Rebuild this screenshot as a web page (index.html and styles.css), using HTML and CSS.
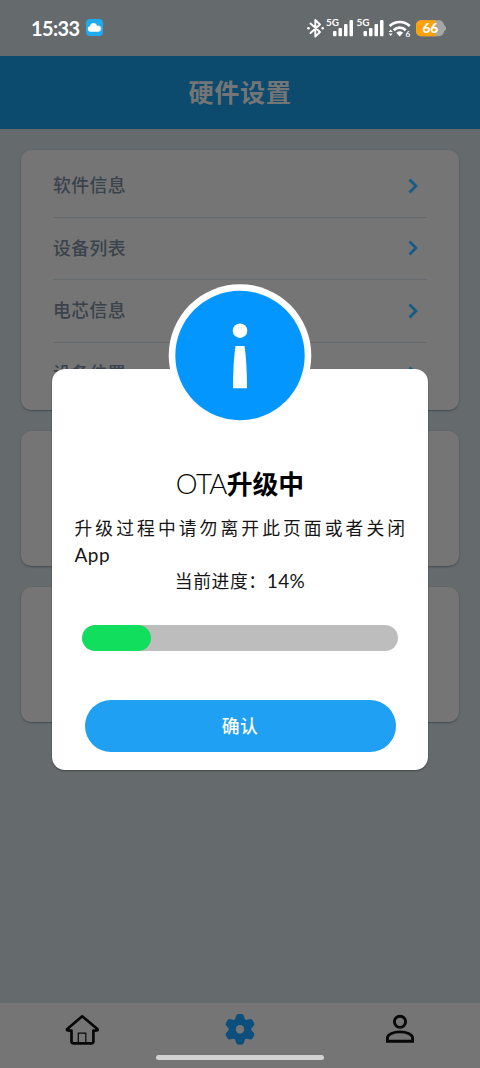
FILE: index.html
```html
<!DOCTYPE html>
<html lang="zh-CN">
<head>
<meta charset="utf-8">
<title>硬件设置</title>
<link rel="stylesheet" href="styles.css">
</head>
<body>
<div class="screen">
  <div class="status">
    <span class="clock">15:33</span>
    <svg class="weather" width="17" height="17" viewBox="0 0 17 17"><rect width="17" height="17" rx="4" fill="#1faaf4"/><circle cx="12.200" cy="9.600" r="3.200" fill="#a9dffc"/><path d="M4.200 12.800a2.900 2.900 0 0 1-.2-5.700a3.700 3.700 0 0 1 7.200-.3a3 3 0 0 1 0 6z" fill="#fff"/></svg>
    <svg class="indicators" width="150" height="28" viewBox="300 13 150 28">
      <g fill="none" stroke="#fff" stroke-width="1.900" stroke-linejoin="round" stroke-linecap="round"><path d="M310.500 22.500l9.500 8.500-4.700 4.500v-16.500l4.700 4.500-9.500 8.500"/></g>
      <circle cx="308.500" cy="27.300" r="1.300" fill="#fff"/><circle cx="322.700" cy="27.300" r="1.300" fill="#fff"/>
      <g fill="#fff" class="net"><text x="326" y="25" textLength="13" lengthAdjust="spacingAndGlyphs">5G</text><text x="356.500" y="25" textLength="13" lengthAdjust="spacingAndGlyphs">5G</text></g>
      <g fill="#fff"><rect x="333" y="30" width="3.500" height="5.300" rx="1"/><rect x="338.500" y="27" width="3.500" height="8.300" rx="1"/><rect x="344" y="23" width="3.500" height="12.300" rx="1"/><rect x="349.500" y="19" width="3.500" height="16.300" rx="1"/><rect x="363.500" y="30" width="3.500" height="5.300" rx="1"/><rect x="369" y="27" width="3.500" height="8.300" rx="1"/><rect x="374.500" y="23" width="3.500" height="12.300" rx="1"/><rect x="380" y="19" width="3.500" height="16.300" rx="1"/></g>
      <g fill="none" stroke="#fff" stroke-width="2.700"><path d="M389.700 25a14.500 14.500 0 0 1 20 0"/><path d="M393.700 29.200a8.500 8.500 0 0 1 12 0"/></g>
      <path d="M396.300 31.700a5.300 5.300 0 0 1 6.800 0l-3.400 3.700z" fill="#fff"/>
      <path d="M388.700 31l2-2.500 2 2.500zM388.700 32.500l2 2.500 2-2.500z" fill="#fff"/>
      <text x="405.600" y="35.500" class="wifi6">6</text>
      <path d="M442 23q4 1.500 4 4.200t-4 4.200z" fill="#a5a6a7"/>
      <rect x="416" y="19.300" width="28" height="16" rx="5" fill="#a5a6a7"/>
      <path d="M421 19.300h14.500v16H421a5 5 0 0 1-5-5v-6a5 5 0 0 1 5-5z" fill="#ffa10a"/>
      <text x="422.400" y="32.200" textLength="15.600" class="level">66</text>
    </svg>
  </div>
  <header class="header">硬件设置</header>
  <main class="content">
    <section class="card list">
      <div class="row"><span>软件信息</span><svg width="10" height="16" viewBox="0 0 10 16"><path d="M1.500 1.500L8 8l-6.500 6.500"/></svg></div>
      <div class="row"><span>设备列表</span><svg width="10" height="16" viewBox="0 0 10 16"><path d="M1.500 1.500L8 8l-6.500 6.500"/></svg></div>
      <div class="row"><span>电芯信息</span><svg width="10" height="16" viewBox="0 0 10 16"><path d="M1.500 1.500L8 8l-6.500 6.500"/></svg></div>
      <div class="row"><span>设备位置</span><svg width="10" height="16" viewBox="0 0 10 16"><path d="M1.500 1.500L8 8l-6.500 6.500"/></svg></div>
    </section>
    <section class="card small"></section>
    <section class="card small"></section>
  </main>
  <nav class="nav">
    <svg width="160" height="65" viewBox="0 1003 160 65"><g fill="none" stroke="#080808"><path d="M82.200 1016.300l-14.600 12.400c-1.500 1.500-.5 2.200 3.900 1.900v11q0 1.700 1.700 1.700h18.500q1.700 0 1.700-1.700v-11c4 .3 5.200-.4 3.700-1.900z" stroke-width="2.700" stroke-linejoin="round"/><path d="M78.300 1042.500v-9.300h7.500v9.300" stroke-width="1.200"/></g></svg>
    <svg width="160" height="65" viewBox="160 1003 160 65"><g transform="translate(240 1029.300)"><g fill="#0c4e7c"><circle r="11"/><g id="tooth"><path d="M-5.800-9Q-4.500-10.500-4-13Q-3.600-15.400-1.500-15.400H1.500Q3.600-15.400 4-13Q4.500-10.500 5.800-9V0H-5.800z"/></g><use href="#tooth" transform="rotate(60)"/><use href="#tooth" transform="rotate(120)"/><use href="#tooth" transform="rotate(180)"/><use href="#tooth" transform="rotate(240)"/><use href="#tooth" transform="rotate(300)"/></g><circle r="4.200" fill="#757575"/></g></svg>
    <svg width="160" height="65" viewBox="320 1003 160 65"><g fill="none" stroke="#080808" stroke-width="2.900"><circle cx="400" cy="1021.800" r="5.600"/><path d="M387.400 1041.200v-3.300c0-3.800 6.500-6 12.600-6s12.600 2.200 12.600 6v3.300z"/></g></svg>
    <i class="handle"></i>
  </nav>
  <div class="dialog">
    <svg class="badge" width="144" height="144" viewBox="168 284 144 144"><circle cx="240" cy="355.500" r="71.300" fill="#fff"/><circle cx="240" cy="355.500" r="64.700" fill="#0496ff"/><circle cx="240" cy="330.700" r="7.300" fill="#fff"/><path d="M235.500 346h9q2.500 17 2.500 42.300h-14q0-25.300 2.500-42.300z" fill="#fff"/></svg>
    <h1 class="title"><span class="latin">OTA</span>升级中</h1>
    <div class="message"><div class="line">升级过程中请勿离开此页面或者关闭</div><div class="app">App</div></div>
    <div class="progress-text">当前进度：<span class="pct">14%</span></div>
    <div class="track"><div class="fill"></div></div>
    <button class="confirm">确认</button>
  </div>
</div>
</body>
</html>
```
FILE: styles.css
```css
* { box-sizing: border-box; }
body { margin: 0; font-family: "Noto Sans CJK SC", sans-serif; }
.screen { position: relative; width: 480px; height: 1068px; background: #656a6d; display: flex; flex-direction: column; overflow: hidden; }
.status { height: 56px; flex: none; display: flex; align-items: center; padding: 0 30px 1px 31px; }
.clock { font: 700 20px/28px Lato, sans-serif; color: #fff; width: 48px; white-space: nowrap; letter-spacing: -.6px; }
.weather { margin-left: 7px; }
.indicators { margin-left: auto; }
.net { font: 700 10px Lato, sans-serif; }
.wifi6 { font: 700 8px Lato, sans-serif; fill: #fff; }
.level { font: 900 13.500px Lato, sans-serif; fill: #fff; }
.header { height: 73px; flex: none; background: #0c4a6e; color: #757575; display: flex; align-items: center; justify-content: center; font-size: 25.200px; font-weight: 700; letter-spacing: .6px; padding-bottom: 3px; }
.content { flex: 1; padding: 21px 21px 0; display: flex; flex-direction: column; gap: 21px; }
.card { background: #757575; border-radius: 10px; box-shadow: 0 1px 2px rgba(30, 40, 50, .45); }
.list { height: 259.500px; padding: 5px 32px; }
.small { height: 135px; }
.row { height: 62.500px; display: flex; align-items: center; justify-content: space-between; padding: 0 9px 0 0; font-size: 17.800px; font-weight: 500; letter-spacing: .5px; color: #3a424b; border-bottom: 1px solid #666b70; }
.row span { padding-bottom: 3px; }
.row:last-child { border: 0; }
.row svg { fill: none; stroke: #145b86; stroke-width: 2.700; }
.nav { position: relative; height: 65px; flex: none; display: flex; background: #757575; }
.handle { position: absolute; left: 156px; top: 52px; width: 168px; height: 5px; border-radius: 3px; background: #d2d2d2; }
.dialog { position: absolute; left: 52px; top: 369px; width: 376px; height: 401px; border-radius: 13px; background: #fff; box-shadow: 0 1px 2px rgba(0, 0, 0, .35); display: flex; flex-direction: column; align-items: center; color: #151515; }
.badge { flex: none; margin-top: -85px; }
.title { margin: 35px 0 0; height: 40px; line-height: 40px; font-size: 25.800px; font-weight: 700; color: #000; white-space: nowrap; }
.latin { font-family: Lato, sans-serif; font-weight: 300; font-size: 27.500px; letter-spacing: -.6px; }
.message { width: 331px; height: 53px; margin-top: 11px; font-size: 17.800px; line-height: 27px; }
.line { text-align: justify; text-align-last: justify; white-space: nowrap; letter-spacing: 3.070px; }
.app { font-family: Lato, sans-serif; font-size: 19px; letter-spacing: .5px; }
.progress-text { height: 27px; line-height: 27px; font-size: 17.800px; letter-spacing: .6px; white-space: nowrap; }
.pct { font-family: Lato, sans-serif; font-size: 19px; letter-spacing: .4px; }
.track { width: 316px; height: 26px; margin-top: 31px; border-radius: 13px; background: #bdbdbd; overflow: hidden; }
.fill { width: 69px; height: 26px; border-radius: 13px; background: #12de5e; }
.confirm { width: 311px; height: 52px; margin-top: 49px; border: 0; border-radius: 26px; background: #1fa0f2; color: #fff; font: 500 17.800px "Noto Sans CJK SC", sans-serif; letter-spacing: .5px; padding: 0 0 2px; }
```
